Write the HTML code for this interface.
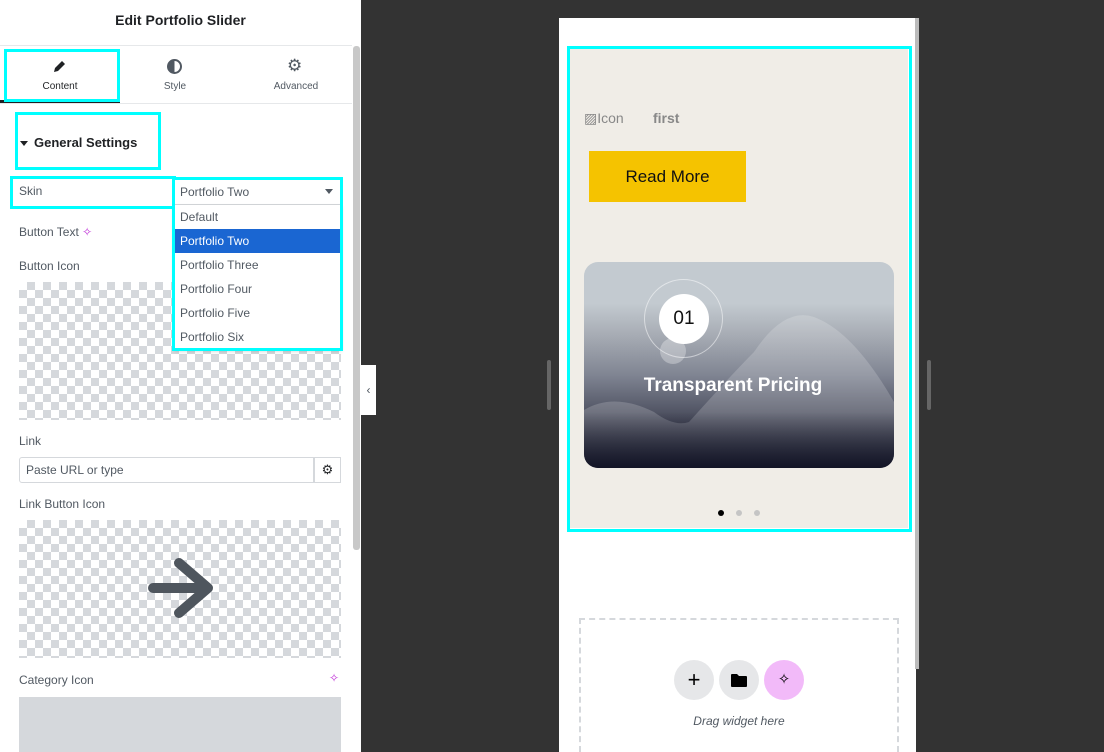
<!DOCTYPE html>
<html style="overflow:hidden;width:1104px;height:752px"><head><style>
*{box-sizing:border-box;margin:0;padding:0}
body{width:1104px;height:752px;overflow:hidden;background:#333;font-family:"Liberation Sans",Roboto,sans-serif;position:relative}
.abs{position:absolute}
.panel{left:0;top:0;width:361px;height:752px;background:#fff}
.cy{position:absolute;border:3px solid #00ffff}
.lbl{position:absolute;font-size:12px;color:#515962}
.chk{position:absolute;background-color:#fff;background-image:linear-gradient(45deg,#d5d8dc 25%,transparent 25%,transparent 75%,#d5d8dc 75%),linear-gradient(45deg,#d5d8dc 25%,transparent 25%,transparent 75%,#d5d8dc 75%);background-size:16px 16px;background-position:0 0,8px 8px}
.opt{position:absolute;left:0;width:166px;height:24px;font-size:12px;color:#515962;padding-left:6px;line-height:24px}
</style></head><body>
<div class="abs panel">
  <div class="abs" style="left:0;top:12px;width:361px;text-align:center;font-weight:bold;font-size:14px;color:#1f2124">Edit Portfolio Slider</div>
  <div class="abs" style="left:0;top:45px;width:352px;height:1px;background:#e6e8ea"></div>
  <div class="abs" style="left:0;top:103px;width:352px;height:1px;background:#e6e8ea"></div>
  <div class="abs" style="left:0;top:100px;width:120px;height:3px;background:#1f2124"></div>
  <svg class="abs" style="left:53px;top:59px" width="14" height="14" viewBox="0 0 14 14"><path d="M1 13l1-4 7-7 3 3-7 7z" fill="#1f2124"/></svg>
  <div class="abs" style="left:0;top:81px;width:120px;text-align:center;font-size:10px;color:#1f2124">Content</div>
  <div class="abs" style="left:167px;top:59px;width:15px;height:15px;border-radius:50%;border:2px solid #515962;background:linear-gradient(90deg,#515962 50%,#fff 50%)"></div>
  <div class="abs" style="left:140px;top:81px;width:70px;text-align:center;font-size:10px;color:#515962">Style</div>
  <div class="abs" style="left:287px;top:56px;font-size:17px;color:#515962">⚙</div>
  <div class="abs" style="left:256px;top:81px;width:80px;text-align:center;font-size:10px;color:#515962">Advanced</div>
  <div class="cy" style="left:4px;top:49px;width:116px;height:53px"></div>
  <div class="abs" style="left:20px;top:141px;border-left:4px solid transparent;border-right:4px solid transparent;border-top:5px solid #1f2124"></div>
  <div class="abs" style="left:34px;top:135px;font-weight:bold;font-size:13px;color:#1f2124">General Settings</div>
  <div class="cy" style="left:15px;top:112px;width:146px;height:58px"></div>
  <div class="lbl" style="left:19px;top:184px">Skin</div>
  <div class="cy" style="left:10px;top:176px;width:166px;height:33px"></div>
  <div class="lbl" style="left:19px;top:225px">Button Text <span style="color:#c036d8">✧</span></div>
  <div class="lbl" style="left:19px;top:259px">Button Icon</div>
  <div class="chk" style="left:19px;top:282px;width:322px;height:138px"></div>
  <div class="lbl" style="left:19px;top:434px">Link</div>
  <div class="abs" style="left:19px;top:457px;width:295px;height:26px;border:1px solid #d5d8dc;border-radius:3px 0 0 3px;font-size:12px;color:#515962;padding:5px 6px">Paste URL or type</div>
  <div class="abs" style="left:314px;top:457px;width:27px;height:26px;border:1px solid #d5d8dc;text-align:center;font-size:13px;line-height:24px;color:#1f2124">⚙</div>
  <div class="lbl" style="left:19px;top:497px">Link Button Icon</div>
  <div class="chk" style="left:19px;top:520px;width:322px;height:138px"></div>
  <svg class="abs" style="left:146px;top:556px" width="70" height="66" viewBox="0 0 70 66"><path d="M7 32H62M33 7L62 32L33 57" stroke="#4f565e" stroke-width="10" stroke-linecap="round" stroke-linejoin="round" fill="none"/></svg>
  <div class="lbl" style="left:19px;top:673px">Category Icon</div>
  <div class="abs" style="left:329px;top:671px;color:#c036d8;font-size:12px">✧</div>
  <div class="abs" style="left:19px;top:697px;width:322px;height:55px;background:#d5d8dc"></div>
  <div class="abs" style="left:174px;top:179px;width:167px;height:26px;background:#fff;border-bottom:1px solid #d5d8dc;font-size:12px;color:#515962;padding:6px 6px">Portfolio Two</div>
  <div class="abs" style="left:325px;top:189px;border-left:4px solid transparent;border-right:4px solid transparent;border-top:5px solid #515962"></div>
  <div class="abs" style="left:174px;top:205px;width:167px;height:144px;background:#fff;box-shadow:0 2px 4px rgba(0,0,0,.2)">
    <div class="opt" style="top:0">Default</div>
    <div class="opt" style="top:24px;background:#1a66d2;color:#fff">Portfolio Two</div>
    <div class="opt" style="top:48px">Portfolio Three</div>
    <div class="opt" style="top:72px">Portfolio Four</div>
    <div class="opt" style="top:96px">Portfolio Five</div>
    <div class="opt" style="top:120px">Portfolio Six</div>
  </div>
  <div class="cy" style="left:172px;top:177px;width:171px;height:174px"></div>
  <div class="abs" style="left:353px;top:46px;width:7px;height:504px;background:#c8c8c8;border-radius:3px"></div>
</div>
<div class="abs" style="left:361px;top:365px;width:15px;height:50px;background:#fff;text-align:center;line-height:50px;font-size:12px;color:#515962">‹</div>
<div class="abs" style="left:547px;top:360px;width:4px;height:50px;background:#666;border-radius:2px"></div>
<div class="abs" style="left:927px;top:360px;width:4px;height:50px;background:#666;border-radius:2px"></div>
<div class="abs" style="left:559px;top:18px;width:357px;height:734px;background:#fff"></div>
<div class="abs" style="left:915px;top:18px;width:4px;height:651px;background:#bbb"></div>
<div class="abs" style="left:570px;top:49px;width:338px;height:479px;background:#f0ede7"></div>
<div class="cy" style="left:567px;top:46px;width:345px;height:486px"></div>
<div class="abs" style="left:584px;top:110px;font-size:14px;color:#888">▨Icon</div>
<div class="abs" style="left:653px;top:110px;font-size:14px;font-weight:bold;color:#888">first</div>
<div class="abs" style="left:589px;top:151px;width:157px;height:51px;background:#f5c300;text-align:center;line-height:51px;font-size:17px;color:#111">Read More</div>
<div class="abs" style="left:584px;top:262px;width:310px;height:206px;border-radius:14px;overflow:hidden;background:linear-gradient(180deg,#c3cad0 0%,#c3cad0 20%,#a8adb5 35%,#7f8492 55%,#444757 78%,#0a0c1e 100%)">
  <svg class="abs" style="left:0;top:0" width="310" height="206"><path d="M0 206 L0 148 Q30 130 70 150 Q90 165 105 160 Q150 110 170 90 Q200 45 230 55 Q270 70 310 140 L310 206 Z" fill="rgba(255,255,255,0.18)"/></svg>
  <div class="abs" style="left:0;top:150px;width:310px;height:56px;background:linear-gradient(180deg,rgba(10,12,30,0) 0%,rgba(10,12,30,.8) 100%)"></div>
  <div class="abs" style="left:60px;top:17px;width:79px;height:79px;border-radius:50%;border:1px solid rgba(255,255,255,.5)"></div>
  <div class="abs" style="left:75px;top:32px;width:50px;height:50px;border-radius:50%;background:#fff;text-align:center;line-height:50px;font-size:19px;color:#111">01</div>
  <div class="abs" style="left:76px;top:76px;width:26px;height:26px;border-radius:50%;background:rgba(255,255,255,.3)"></div>
  <div class="abs" style="left:0;top:113px;width:298px;text-align:center;font-size:19px;font-weight:bold;color:#fff">Transparent Pricing</div>
</div>
<div class="abs" style="left:718px;top:510px;width:6px;height:6px;border-radius:50%;background:#000"></div>
<div class="abs" style="left:736px;top:510px;width:6px;height:6px;border-radius:50%;background:#c5c5c5"></div>
<div class="abs" style="left:754px;top:510px;width:6px;height:6px;border-radius:50%;background:#c5c5c5"></div>
<div class="abs" style="left:579px;top:618px;width:320px;height:134px;border:2px dashed #d5d8dc;border-bottom:none"></div>
<div class="abs" style="left:674px;top:660px;width:40px;height:40px;border-radius:50%;background:#e6e7e9;text-align:center;line-height:40px;font-size:22px;color:#000">+</div>
<div class="abs" style="left:719px;top:660px;width:40px;height:40px;border-radius:50%;background:#e6e7e9"></div>
<svg class="abs" style="left:731px;top:673px" width="16" height="14" viewBox="0 0 16 14"><path d="M0 2Q0 1 1 1H6L8 3H15Q16 3 16 4V13Q16 14 15 14H1Q0 14 0 13Z" fill="#000"/></svg>
<div class="abs" style="left:764px;top:660px;width:40px;height:40px;border-radius:50%;background:#f2baf9;text-align:center;line-height:40px;font-size:15px;color:#000">✧</div>
<div class="abs" style="left:579px;top:714px;width:320px;text-align:center;font-size:12px;font-style:italic;color:#515962">Drag widget here</div>
</body></html>
